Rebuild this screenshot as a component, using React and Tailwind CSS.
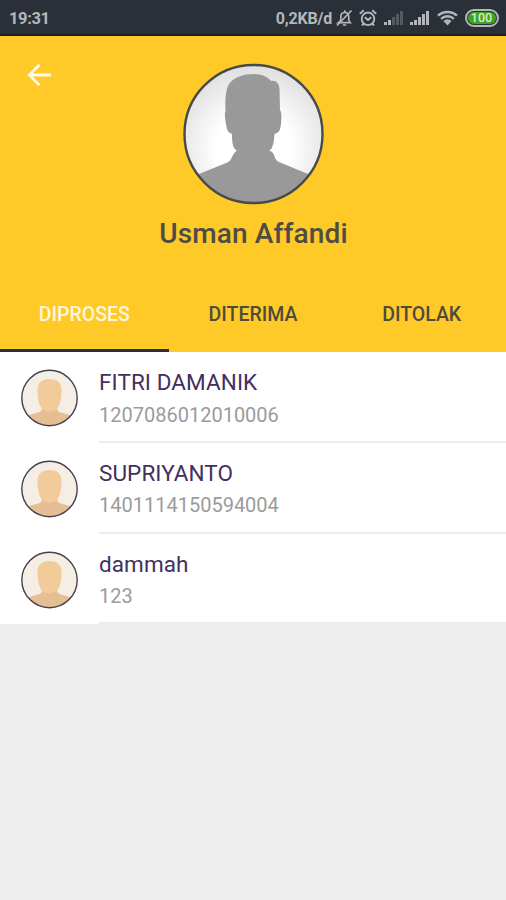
import React, { useState } from "react";

const tabs = ["DIPROSES", "DITERIMA", "DITOLAK"];

const people = [
  { name: "FITRI DAMANIK", nik: "1207086012010006" },
  { name: "SUPRIYANTO", nik: "1401114150594004" },
  { name: "dammah", nik: "123" },
];

const BellOffIcon = () => (
  <svg width="17" height="18" viewBox="0 0 17 18" fill="none" stroke="#b4b7ba" strokeWidth="1.700">
    <path d="M2.500 13.700h11.600c-1-1-1.400-2-1.400-4V7.600c0-2.400-1.500-4.100-3.900-4.100S4.900 5.200 4.900 7.600v2.100c0 2-.9 3-2.400 4z" />
    <path d="M8.800 1.200v2.300M6.800 16h3.500M1 16.500L15.500 1.500" />
  </svg>
);

const AlarmIcon = () => (
  <svg width="18" height="18" viewBox="0 0 18 18" fill="none" stroke="#b4b7ba" strokeWidth="1.900">
    <circle cx="9" cy="9.800" r="6.300" />
    <path d="M5.800 8.200L9 11l3.200-2.800M.8 4.700l4-3.400M17.200 4.700l-4-3.400M4.500 14.800L3 16.500M13.500 14.800l1.500 1.700" />
  </svg>
);

const SignalIcon = ({ level }) => (
  <svg width="20" height="16" viewBox="0 0 20 16">
    {[3, 5, 8, 11, 14].map((h, i) => (
      <rect key={i} x={i * 4} y={15 - h} width="3" height={h} fill={i < level ? "#b4b7ba" : "#555a60"} />
    ))}
  </svg>
);

const WifiIcon = () => (
  <svg width="21" height="16" viewBox="0 0 21 16" fill="none" stroke="#b4b7ba" strokeWidth="2.400">
    <path d="M1 5.700c5.300-5 13.700-5 19 0M4.100 8.900c3.700-3.500 9.100-3.500 12.800 0M7.200 11.800c2-1.700 4.600-1.700 6.600 0" />
    <path d="M7.800 12.500L10.500 15.500l2.700-3c-1.600-1.100-3.800-1.100-5.400 0z" fill="#b4b7ba" stroke="none" />
  </svg>
);

const StatusBar = () => (
  <div className="h-9 shrink-0 bg-[#2b2f37] border-b-2 border-[#1c1a2b] flex items-center text-[#b4b7ba] font-bold pt-0.5 pl-[9px] pr-[7.500px]">
    <span className="mt-0.5 text-[16.500px] tracking-[-0.4px]">19:31</span>
    <span className="mt-0.5 ml-auto text-[16px] tracking-[-0.2px]">0,2KB/d</span>
    <div className="flex items-center ml-[3.500px]">
      <BellOffIcon />
      <span className="ml-[6px]"><AlarmIcon /></span>
      <span className="ml-[7px]"><SignalIcon level={2} /></span>
      <span className="ml-[6px]"><SignalIcon level={5} /></span>
      <span className="ml-[7px]"><WifiIcon /></span>
      <div className="ml-[7px] w-[34px] h-[18px] rounded-full border-2 border-[#b4b7ba] p-px">
        <div className="h-full rounded-full bg-[#3fa51d] flex items-center justify-center text-[12.500px] leading-none font-medium text-[#dcebd6]">
          100
        </div>
      </div>
    </div>
  </div>
);

const ProfileAvatar = () => (
  <svg width="143" height="142" viewBox="0 0 143 142" className="block">
    <defs>
      <radialGradient id="profileBg" cx="0.5" cy="0.600" r="0.600">
        <stop offset="0.450" stopColor="#ffffff" />
        <stop offset="1" stopColor="#dfdfdf" />
      </radialGradient>
      <clipPath id="profileClip">
        <circle cx="71.500" cy="71" r="69" />
      </clipPath>
    </defs>
    <circle cx="71.500" cy="71" r="69" fill="url(#profileBg)" />
    <path
      clipPath="url(#profileClip)"
      fill="#999999"
      d="M43.500 48C43 38 43.500 27 47 21C52 14 62 11 71 11C79 11 85 13 89 18C94 17 97 20 97.500 26L98 47C100 50 99.500 58 98.500 64C98 68 96 70 92.500 71C92 76 92 80 90.500 83C90 86 88 87 87 87.500C90 88 91 90 92 92C93.500 96 94.500 98 97 99L126 111L143 122V142H0V122L17 111L44 100C47 99 48 98 49.500 95C51 92 53 88 55 88C52 86 51 83 50.500 80C50 76 50 74 50 71C47 70 45 68 44.500 64C43.500 58 42 51 43.500 48Z"
    />
    <circle cx="71.500" cy="71" r="69" fill="none" stroke="#474a4b" strokeWidth="2.400" />
  </svg>
);

const PersonAvatar = () => (
  <svg width="58" height="58" viewBox="0 0 58 58" className="block">
    <defs>
      <clipPath id="personClip">
        <circle cx="28.500" cy="29" r="28" />
      </clipPath>
    </defs>
    <circle cx="28.500" cy="29" r="28" fill="#f5eee5" />
    <g clipPath="url(#personClip)">
      <path fill="#e5be94" d="M21 34h15v5c0 2.500 1 3.500 3 4.200l8 2.300c4 1.200 7 4 8 7v6H2v-6c1-3 4-5.800 8-7l8-2.300c2-.700 3-1.700 3-4.200z" />
      <path fill="#f2cb9b" d="M16.500 21c0-7.500 4.500-11 12-11s12 3.500 12 11c0 7-.8 12.500-3 16.500-1.800 3.300-5 5-9 5s-7.200-1.700-9-5c-2.200-4-3-9.500-3-16.500z" />
    </g>
    <circle cx="28.500" cy="29" r="27.700" fill="none" stroke="#47404f" strokeWidth="1.400" />
  </svg>
);

const App = () => {
  const [activeTab, setActiveTab] = useState("DIPROSES");

  return (
    <div className="w-[506px] h-[900px] flex flex-col overflow-hidden bg-[#eeeeee] font-[Roboto,sans-serif]">
      <StatusBar />

      {/* Profile header */}
      <header className="h-[316px] shrink-0 bg-[#ffc928] flex flex-col">
        <div className="grid grid-cols-[182px_143px_1fr] items-start pt-[27px]">
          <button className="w-6 ml-[27px] text-white" aria-label="Kembali">
            <svg width="24" height="24" viewBox="0 0 24 24" fill="none" stroke="#fffbe8" strokeWidth="2.800">
              <path d="M24 12H3M12.500 1.800L2.300 12l10.200 10.200" />
            </svg>
          </button>
          <ProfileAvatar />
        </div>
        <h1 className="mt-[12px] pl-px text-center text-[28px] leading-[34px] font-medium tracking-[0.150px] text-[#4d4c45]">
          Usman Affandi
        </h1>
        <nav className="mt-auto h-[76px] grid grid-cols-3">
          {tabs.map((tab) => (
            <button
              key={tab}
              onClick={() => setActiveTab(tab)}
              className={`border-b-[3px] pt-[4px] text-[19.500px] font-medium ${
                activeTab === tab
                  ? "text-[#fff7dc] border-[#2b2f37]"
                  : "text-[#4d4c3c] border-transparent"
              }`}
            >
              {tab}
            </button>
          ))}
        </nav>
      </header>

      {/* People list */}
      <ul>
        {people.map((person) => (
          <li key={person.nik} className="h-[90.800px] bg-white flex">
            <div className="w-[99px] pl-[21px] pt-[17px]">
              <PersonAvatar />
            </div>
            <div className="flex-1 border-b-2 border-[#ececec] pt-[16px]">
              <p className="text-[22.500px] leading-[28px] tracking-[0.080px] text-[#432f60]">{person.name}</p>
              <p className="mt-[6.500px] text-[20px] leading-[24px] text-[#9b9b9b]">{person.nik}</p>
            </div>
          </li>
        ))}
      </ul>
    </div>
  );
};

export default App;
